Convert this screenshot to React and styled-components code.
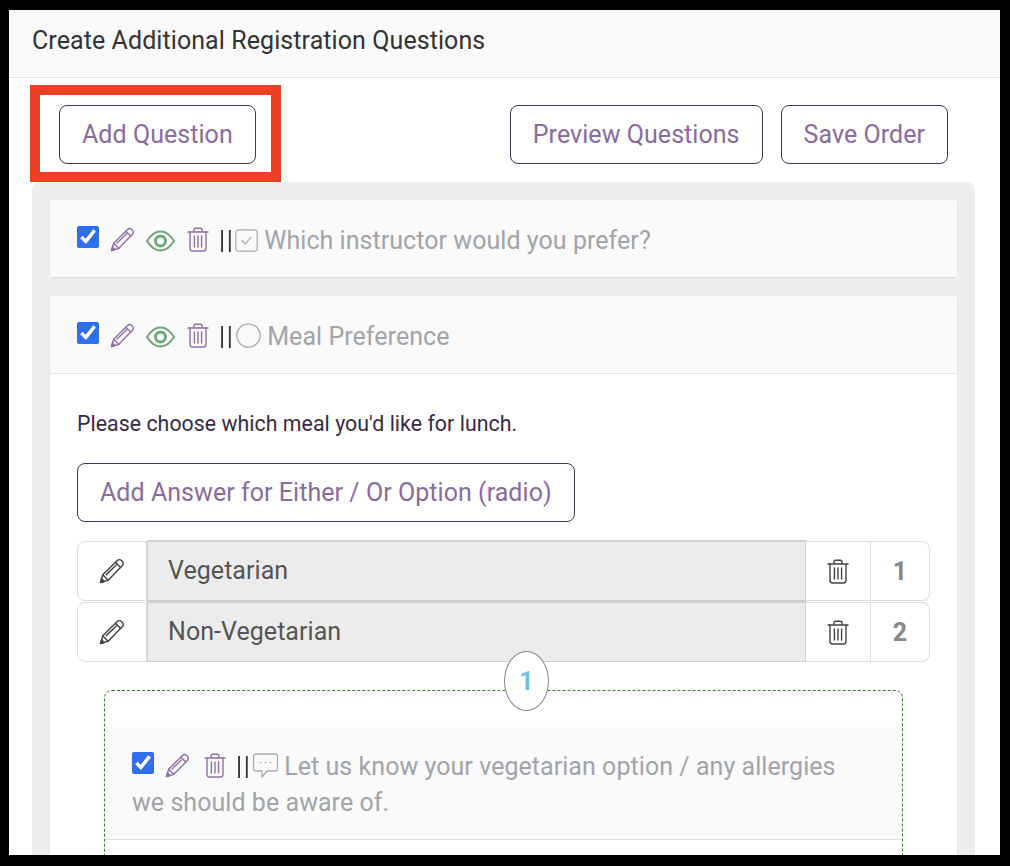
import styled, { createGlobalStyle } from "styled-components";

const GlobalStyle = createGlobalStyle`
  html, body {
    margin: 0;
    background: #000;
  }
  body {
    font-family: Roboto, "Liberation Sans", sans-serif;
    letter-spacing: 0.05px;
  }
`;

const Frame = styled.div`
  width: 1010px;
  height: 866px;
  box-sizing: border-box;
  padding: 10px 10px 11px 9px;
  background: #000;
  overflow: hidden;
`;

const Sheet = styled.div`
  position: relative;
  height: 100%;
  background: #fff;
  overflow: hidden;
`;

const PageHeader = styled.div`
  height: 68px;
  box-sizing: border-box;
  padding: 0 0 6px 23px;
  display: flex;
  align-items: center;
  background: #fafafa;
  border-bottom: 1px solid #e2e2e2;
  font-size: 25px;
  letter-spacing: 0.08px;
  color: #333;
`;

const Toolbar = styled.div`
  display: flex;
  justify-content: space-between;
  padding: 27px 52px 18px 50px;
`;

const ToolbarGroup = styled.div`
  display: flex;
  gap: 18px;
`;

const OutlineButton = styled.button`
  height: 59px;
  padding: 0 22px;
  background: #fff;
  border: 1px solid #43354f;
  border-radius: 8px;
  font-family: inherit;
  font-size: 25px;
  letter-spacing: 0.05px;
  color: #8b6b9f;
`;

// the red annotation drawn over the screenshot
const Highlight = styled.div`
  position: absolute;
  left: 21px;
  top: 75px;
  width: 251px;
  height: 97px;
  box-sizing: border-box;
  border: 10px solid #ea4025;
  pointer-events: none;
`;

const Panel = styled.div`
  margin: 0 25px 0 23px;
  padding: 18px;
  background: #eee;
  border-radius: 8px 8px 0 0;
  display: flex;
  flex-direction: column;
  gap: 19px;
`;

const Card = styled.div`
  background: #fff;
  border-radius: 4px;
  box-shadow: 0 1px 2px rgba(0, 0, 0, 0.1);
`;

const QuestionHeader = styled.div`
  padding: ${(props) => (props.$nested ? "22px 34px 18px 27px" : "23px 27px 18px")};
  background: #fafafa;
  border-bottom: ${(props) => (props.$ruled ? "1px solid #e2e2e2" : "none")};
  font-size: 25px;
  line-height: 36px;
  color: #a1a4a9;
`;

const Check = styled.input.attrs({ type: "checkbox" })`
  width: 22px;
  height: 22px;
  margin: 0 11px 0 0;
  vertical-align: 1px;
  accent-color: #2f6fed;
`;

const Glyph = styled.svg`
  display: inline-block;
  vertical-align: -3px;
  margin-right: ${(props) => props.$gap || 0}px;
  fill: none;
  stroke: ${(props) => props.$color || "#8f6fa5"};
  stroke-width: ${(props) => props.$weight || 1.4};
  stroke-linecap: round;
  stroke-linejoin: round;
`;

const Bars = styled.span`
  display: inline-block;
  margin: 0 0.8px 0 -1px;
  color: #333;
  will-change: transform;
  font-size: 25px;
  letter-spacing: 1.6px;
  line-height: 1;
`;

const CardBody = styled.div`
  padding: 36px 27px 40px;
`;

const Prompt = styled.p`
  margin: 0 0 25px;
  font-size: 21.3px;
  line-height: 28px;
  color: #3a2a45;
`;

const AnswerList = styled.div`
  margin-top: 19px;
  display: flex;
  flex-direction: column;
  gap: 1px;
`;

const AnswerRow = styled.div`
  display: grid;
  grid-template-columns: 70px 659px 65px 59px;
  height: 60px;
  font-size: 25px;
`;

const RowCell = styled.div`
  display: flex;
  align-items: center;
  justify-content: center;
  box-sizing: border-box;
  border: 1px solid #ddd;
  border-left-width: ${(props) => (props.$first ? 1 : 0)}px;
  border-radius: ${(props) =>
    props.$first ? "8px 0 0 8px" : props.$last ? "0 8px 8px 0" : "0"};
`;

const AnswerField = styled.div`
  display: flex;
  align-items: center;
  padding: 0 0 2px 20px;
  margin-top: -1px;
  background: #ececec;
  border: 1px solid #cfcfcf;
  border-top-width: 2px;
  color: #555;
`;

const RowNumber = styled(RowCell)`
  font-weight: 700;
  color: #888;
`;

const FollowUp = styled.div`
  position: relative;
  margin: 28px 27px 0;
  padding: 36px 0 60px;
  border: 1px dashed #2f8a1e;
  border-radius: 8px 8px 0 0;
`;

const StepBadge = styled.div`
  position: absolute;
  left: 399px;
  top: -40px;
  width: 45px;
  height: 60px;
  box-sizing: border-box;
  display: flex;
  align-items: center;
  justify-content: center;
  background: #fff;
  border: 1px solid #888;
  border-radius: 50%;
  font-size: 25px;
  font-weight: 700;
  color: #72bde0;
`;

const Pencil = ({ color, gap, size = 25 }) => (
  <Glyph width={size} height={size} viewBox="0 0 25 25" $color={color} $gap={gap}>
    <path d="M1.5 23.5 L3.6 16.2 L17.6 2.4 a2.8 2.8 0 0 1 4 0 l0.9 0.9 a2.8 2.8 0 0 1 0 4 L8.8 21.3 Z" />
    <path d="M3.6 16.2 L8.8 21.3 M15.8 4.2 L20.8 9.1 M7 16 L16.4 7" />
    <path d="M1.5 23.5 L2.4 20 L5 22.6 Z" fill={color || "#8f6fa5"} />
  </Glyph>
);

const Eye = () => (
  <Glyph width={29} height={22} viewBox="0 0 29 22" $color="#6fa776" $gap={12} $weight={2}>
    <path d="M1 11 C5 4.5 10 1.5 14.5 1.5 S24 4.5 28 11 C24 17.5 19 20.5 14.5 20.5 S5 17.5 1 11 Z" />
    <circle cx="14.5" cy="11" r="5" strokeWidth="3" />
  </Glyph>
);

const Trash = ({ color, gap }) => (
  <Glyph width={22} height={25} viewBox="0 0 22 25" $color={color} $gap={gap}>
    <path d="M1 5 H21 M7 5 V2.8 a1.6 1.6 0 0 1 1.6 -1.6 H13.4 a1.6 1.6 0 0 1 1.6 1.6 V5" />
    <path d="M3 5 V21.6 a2.4 2.4 0 0 0 2.4 2.4 H16.6 a2.4 2.4 0 0 0 2.4 -2.4 V5" />
    <path d="M7.4 9 V20 M11 9 V20 M14.6 9 V20" />
  </Glyph>
);

const CheckboxType = () => (
  <Glyph width={23} height={23} viewBox="0 0 23 23" $color="#a9acb0" $gap={6} $weight={1.2}>
    <rect x="0.8" y="0.8" width="21.4" height="21.4" rx="3" />
    <path d="M7 11.5 L10.2 15 L16.2 8.2" />
  </Glyph>
);

const RadioType = () => (
  <Glyph width={26} height={25} viewBox="-1 0 26 25" $color="#a9acb0" $gap={6} $weight={1.4}>
    <circle cx="12.5" cy="12.5" r="11.6" />
  </Glyph>
);

const CommentType = () => (
  <Glyph width={26} height={25} viewBox="-0.5 0 26 25" $color="#a9acb0" $gap={6} $weight={1.3}>
    <path d="M3.5 1 H22.5 a2.5 2.5 0 0 1 2.5 2.5 V15.5 a2.5 2.5 0 0 1 -2.5 2.5 H14.5 L9.5 24 V18 H3.5 a2.5 2.5 0 0 1 -2.5 -2.5 V3.5 a2.5 2.5 0 0 1 2.5 -2.5 Z" />
    <path d="M8 9.5 h0.2 M13 9.5 h0.2 M18 9.5 h0.2" strokeWidth="1.6" />
  </Glyph>
);

const answers = ["Vegetarian", "Non-Vegetarian"];

export default function App() {
  return (
    <Frame>
      <GlobalStyle />
      <Sheet>
        <PageHeader>Create Additional Registration Questions</PageHeader>
        <Toolbar>
          <OutlineButton>Add Question</OutlineButton>
          <ToolbarGroup>
            <OutlineButton>Preview Questions</OutlineButton>
            <OutlineButton>Save Order</OutlineButton>
          </ToolbarGroup>
        </Toolbar>
        <Highlight />
        <Panel>
          <Card>
            <QuestionHeader>
              <Check defaultChecked />
              <Pencil gap={11} />
              <Eye />
              <Trash gap={11} />
              <Bars>||</Bars>
              <CheckboxType />
              Which instructor would you prefer?
            </QuestionHeader>
          </Card>
          <Card>
            <QuestionHeader $ruled>
              <Check defaultChecked />
              <Pencil gap={11} />
              <Eye />
              <Trash gap={11} />
              <Bars>||</Bars>
              <RadioType />
              Meal Preference
            </QuestionHeader>
            <CardBody>
              <Prompt>Please choose which meal you'd like for lunch.</Prompt>
              <OutlineButton>Add Answer for Either / Or Option (radio)</OutlineButton>
              <AnswerList>
                {answers.map((answer, index) => (
                  <AnswerRow key={answer}>
                    <RowCell $first>
                      <Pencil color="#444" size={26} />
                    </RowCell>
                    <AnswerField>{answer}</AnswerField>
                    <RowCell>
                      <Trash color="#444" />
                    </RowCell>
                    <RowNumber $last>{index + 1}</RowNumber>
                  </AnswerRow>
                ))}
              </AnswerList>
              <FollowUp>
                <StepBadge>1</StepBadge>
                <QuestionHeader $ruled $nested>
                  <Check defaultChecked />
                  <Pencil gap={14} />
                  <Trash gap={11} />
                  <Bars>||</Bars>
                  <CommentType />
                  Let us know your vegetarian option / any allergies we should be aware of.
                </QuestionHeader>
              </FollowUp>
            </CardBody>
          </Card>
        </Panel>
      </Sheet>
    </Frame>
  );
}
